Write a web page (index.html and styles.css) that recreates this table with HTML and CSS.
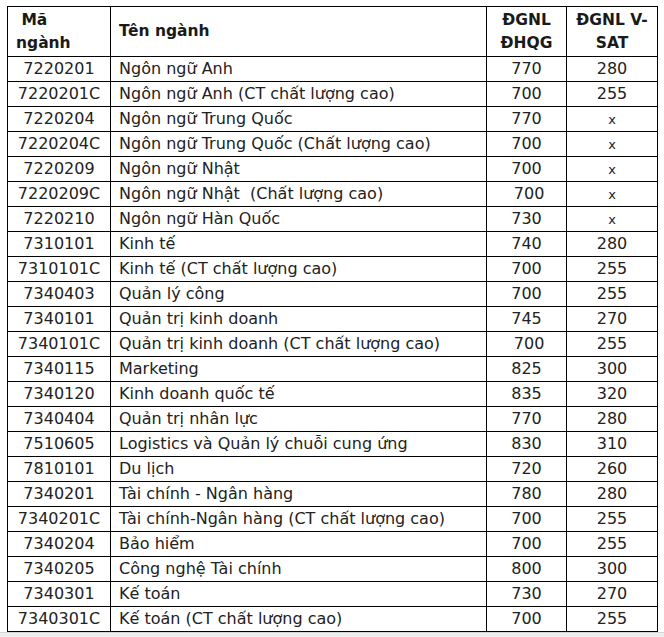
FILE: index.html
```html
<!DOCTYPE html>
<html lang="vi">
<head>
<meta charset="utf-8">
<title>Điểm chuẩn</title>
<link rel="stylesheet" href="styles.css">
</head>
<body>
<div class="page">
  <div class="content">
    <table class="scores">
      <colgroup>
        <col class="c-code"><col class="c-name"><col class="c-dhqg"><col class="c-vsat">
      </colgroup>
      <thead>
        <tr class="head">
          <th class="left">&nbsp;Mã<br>ngành</th>
          <th class="left">Tên ngành</th>
          <th>ĐGNL<br>ĐHQG</th>
          <th>ĐGNL V-<br>SAT</th>
        </tr>
      </thead>
      <tbody>
        <tr><td class="ctr">7220201</td><td>Ngôn ngữ Anh</td><td class="ctr">770</td><td class="ctr">280</td></tr>
        <tr><td class="ctr">7220201C</td><td>Ngôn ngữ Anh (CT chất lượng cao)</td><td class="ctr">700</td><td class="ctr">255</td></tr>
        <tr><td class="ctr">7220204</td><td>Ngôn ngữ Trung Quốc</td><td class="ctr">770</td><td class="ctr"><span class="na">x</span></td></tr>
        <tr><td class="ctr">7220204C</td><td>Ngôn ngữ Trung Quốc (Chất lượng cao)</td><td class="ctr">700</td><td class="ctr"><span class="na">x</span></td></tr>
        <tr><td class="ctr">7220209</td><td>Ngôn ngữ Nhật</td><td class="ctr">700</td><td class="ctr"><span class="na">x</span></td></tr>
        <tr><td class="ctr">7220209C</td><td>Ngôn ngữ Nhật &nbsp;(Chất lượng cao)</td><td class="ctr">&nbsp;700</td><td class="ctr"><span class="na">x</span></td></tr>
        <tr><td class="ctr">7220210</td><td>Ngôn ngữ Hàn Quốc</td><td class="ctr">730</td><td class="ctr"><span class="na">x</span></td></tr>
        <tr><td class="ctr">7310101</td><td>Kinh tế</td><td class="ctr">740</td><td class="ctr">280</td></tr>
        <tr><td class="ctr">7310101C</td><td>Kinh tế (CT chất lượng cao)</td><td class="ctr">700</td><td class="ctr">255</td></tr>
        <tr><td class="ctr">7340403</td><td>Quản lý công</td><td class="ctr">700</td><td class="ctr">255</td></tr>
        <tr><td class="ctr">7340101</td><td>Quản trị kinh doanh</td><td class="ctr">745</td><td class="ctr">270</td></tr>
        <tr><td class="ctr">7340101C</td><td>Quản trị kinh doanh (CT chất lượng cao)</td><td class="ctr">&nbsp;700</td><td class="ctr">255</td></tr>
        <tr><td class="ctr">7340115</td><td>Marketing</td><td class="ctr">825</td><td class="ctr">300</td></tr>
        <tr><td class="ctr">7340120</td><td>Kinh doanh quốc tế</td><td class="ctr">835</td><td class="ctr">320</td></tr>
        <tr><td class="ctr">7340404</td><td>Quản trị nhân lực</td><td class="ctr">770</td><td class="ctr">280</td></tr>
        <tr><td class="ctr">7510605</td><td>Logistics và Quản lý chuỗi cung ứng</td><td class="ctr">830</td><td class="ctr">310</td></tr>
        <tr><td class="ctr">7810101</td><td>Du lịch</td><td class="ctr">720</td><td class="ctr">260</td></tr>
        <tr><td class="ctr">7340201</td><td>Tài chính - Ngân hàng</td><td class="ctr">780</td><td class="ctr">280</td></tr>
        <tr><td class="ctr">7340201C</td><td>Tài chính-Ngân hàng (CT chất lượng cao)</td><td class="ctr">700</td><td class="ctr">255</td></tr>
        <tr><td class="ctr">7340204</td><td>Bảo hiểm</td><td class="ctr">700</td><td class="ctr">255</td></tr>
        <tr><td class="ctr">7340205</td><td>Công nghệ Tài chính</td><td class="ctr">800</td><td class="ctr">300</td></tr>
        <tr><td class="ctr">7340301</td><td>Kế toán</td><td class="ctr">730</td><td class="ctr">270</td></tr>
        <tr><td class="ctr">7340301C</td><td>Kế toán (CT chất lượng cao)</td><td class="ctr">700</td><td class="ctr">255</td></tr>
        <tr><td class="ctr">&nbsp;</td><td>&nbsp;</td><td class="ctr">&nbsp;</td><td class="ctr">&nbsp;</td></tr>
      </tbody>
    </table>
  </div>
  <div class="bottom-bar"></div>
</div>
</body>
</html>
```
FILE: styles.css
```css
html, body {
  margin: 0;
  padding: 0;
  background: #ffffff;
}

.page {
  width: 664px;
  height: 637px;
  display: flex;
  flex-direction: column;
  overflow: hidden;
}

.content {
  flex: 1;
  overflow: hidden;
  padding: 6px 0 0 7px;
}

.bottom-bar {
  height: 4px;
  background: #ededed;
  border-top: 1px solid #d6d6d6;
}

.scores {
  border-collapse: collapse;
  table-layout: fixed;
  width: 650px;
  font-family: "DejaVu Sans", Verdana, sans-serif;
  font-size: 16px;
  color: #222222;
}

.c-code { width: 103px; }
.c-name { width: 376px; }
.c-dhqg { width: 80px; }
.c-vsat { width: 91px; }

.scores th,
.scores td {
  border: 1px solid #000000;
  padding: 0 8px;
  white-space: nowrap;
  overflow: hidden;
}

.scores th {
  font-size: 15.5px;
  font-weight: bold;
  line-height: 23px;
  text-align: center;
  color: #1a1a1a;
}

.scores th.left {
  text-align: left;
}

.head {
  height: 50px;
}

.scores tbody tr {
  height: 25px;
}

.scores td {
  line-height: 20px;
  text-align: left;
}

.scores td.ctr {
  text-align: center;
  padding: 0 2px;
}

.na {
  font-size: 13px;
}
```
